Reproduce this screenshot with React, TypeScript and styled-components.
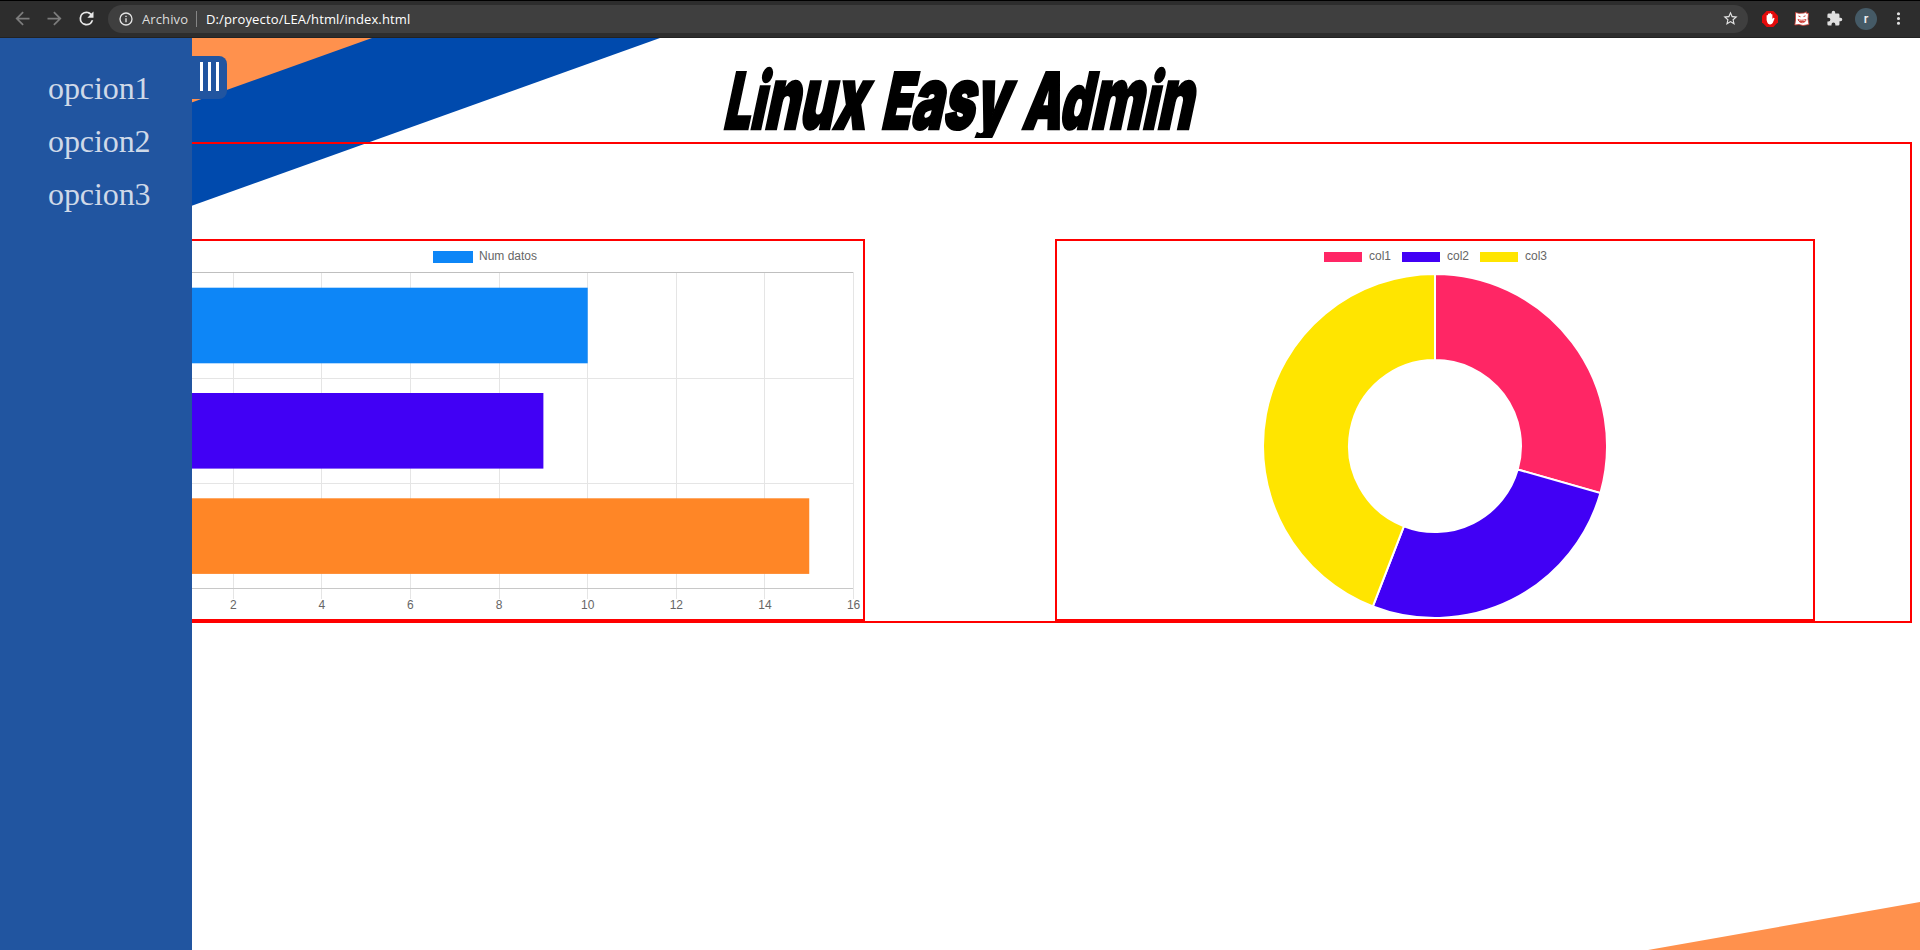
import React from 'react';
import styled, { createGlobalStyle } from 'styled-components';

const Global = createGlobalStyle`
  * { box-sizing: border-box; }
  html, body { margin: 0; padding: 0; background: #fff; overflow: hidden; }
`;

const Screen = styled.div`
  width: 1920px;
  height: 950px;
  display: flex;
  flex-direction: column;
  overflow: hidden;
`;

const BrowserBar = styled.header`
  height: 38px;
  flex: none;
  display: flex;
  align-items: center;
  padding: 0 0 1px 12px;
  background: #2d2d2d;
  border-top: 1px solid #000;
  border-bottom: 1px solid #222;
  font: 13px "Open Sans", "Noto Sans", sans-serif;
  color: #fff;
`;

const NavButton = styled.span<{ $dim?: boolean }>`
  width: 32px;
  height: 28px;
  display: grid;
  place-items: center;
  margin-left: -6px;
  margin-right: 6px;
  color: ${p => (p.$dim ? '#7c7c7c' : '#e8e8e8')};
`;

const Omnibox = styled.div`
  width: 1640px;
  height: 28px;
  display: flex;
  align-items: center;
  border-radius: 14px;
  background: #3f3f3f;
  padding: 0 9px 0 10px;
  color: #e4e4e4;
`;

const Scheme = styled.span`
  width: 55px;
  margin-left: 8px;
  border-right: 1px solid #858585;
  line-height: 16px;
  letter-spacing: 0.12px;
  color: #ddd;
`;

const Url = styled.span`
  flex: 1;
  margin-left: 9px;
  letter-spacing: 0.13px;
  color: #fff;
`;

const Extensions = styled.div`
  display: flex;
  align-items: center;
  margin-left: 12px;
`;

const ExtSlot = styled.span<{ $w: number }>`
  width: ${p => p.$w}px;
  height: 28px;
  display: grid;
  place-items: center;
  color: #e0e0e0;
`;

const Avatar = styled.span`
  width: 22px;
  height: 22px;
  border-radius: 50%;
  background: #455a66;
  font: 500 13px/21px Roboto, sans-serif;
  text-align: center;
  color: #eee;
`;

const Page = styled.div`
  position: relative;
  flex: 1;
  display: flex;
`;

const Backdrop = styled.svg`
  position: absolute;
  inset: 0;
`;

const Sidebar = styled.nav`
  position: absolute;
  z-index: 2;
  left: 0;
  top: 0;
  width: 192px;
  height: 912px;
  background: #2155a0;
  padding: 24px 0 0 48px;
`;

const Option = styled.a`
  display: block;
  height: 53px;
  font: 32px/53px "Liberation Serif", serif;
  letter-spacing: -0.08px;
  color: #cfd9e8;
`;

const Toggle = styled.button`
  position: absolute;
  left: 192px;
  top: 18px;
  width: 35px;
  height: 43px;
  display: flex;
  gap: 5px;
  border: 0;
  border-radius: 0 8px 8px 0;
  background: #2155a0;
  padding: 6px 0 8px 8px;
`;

const ToggleBar = styled.i`
  width: 3px;
  height: 29px;
  background: #fff;
`;

const Main = styled.main`
  position: relative;
  flex: 1;
  padding: 0 8px;
`;

const Title = styled.h1`
  margin: 0 0 0 714px;
  height: 104px;
  display: flex;
  font: 900 78px/78px Inter, sans-serif;
  color: #000;
  -webkit-text-stroke: 2.5px #000;
  clip-path: inset(0 0 4px 0);
`;

const Word = styled.span<{ $w: number; $scale: number }>`
  display: block;
  width: ${p => p.$w}px;
  padding-top: 23.5px;
  white-space: nowrap;
  transform-origin: 0 92px;
  transform: skewX(-12deg) scaleX(${p => p.$scale});
`;

const Letters = styled.span<{ $size: number }>`
  font-size: ${p => p.$size}px;
  line-height: 0;
`;

const Charts = styled.section`
  position: relative;
  height: 481px;
  display: flex;
  justify-content: space-around;
  border: 2px solid #f00;
  padding-top: 95px;
`;

const ChartBox = styled.div`
  width: 760px;
  height: 382px;
  border: 2px solid #f00;
  font: 12px "Liberation Sans", Arial, sans-serif;

  svg { display: block; }
`;

const ticks = [0, 2, 4, 6, 8, 10, 12, 14, 16];
const bars = [
  { value: 10, color: '#0d86f7' },
  { value: 9, color: '#4100f5' },
  { value: 15, color: '#ff8626' },
];
const originX = 37.6;
const unit = 44.31;

function BarChart() {
  return (
    <svg width="756" height="378">
      <rect x="326" y="10" width="40" height="12" fill="#0d86f7" />
      <text x="372" y="19" fill="#666">Num datos</text>
      <g shapeRendering="crispEdges">
        {ticks.map(t => (
          <rect key={t} x={Math.round(originX + t * unit - 0.5)} y="31" width="1" height="327" fill="#e5e5e5" />
        ))}
        {[137, 242].map(y => <rect key={y} x="27" y={y} width="719" height="1" fill="#e5e5e5" />)}
        <rect x="27" y="31" width="719" height="1" fill="#bfbfbf" />
        <rect x="27" y="347" width="719" height="1" fill="#c8c8c8" />
      </g>
      {bars.map((b, i) => (
        <rect key={b.value} x={originX} y={46.7 + i * 105.3} width={b.value * unit} height="75.6" fill={b.color} />
      ))}
      {ticks.map(t => (
        <text key={t} x={originX + t * unit} y="368" textAnchor="middle" fill="#666">{t}</text>
      ))}
    </svg>
  );
}

const slices = [
  { label: 'col1', value: 10, color: '#ff2665' },
  { label: 'col2', value: 9, color: '#4100f5' },
  { label: 'col3', value: 15, color: '#ffe500' },
];

function slicePath(from: number, to: number) {
  const at = (f: number, r: number) => {
    const a = f * Math.PI * 2;
    return `${378 + r * Math.sin(a)} ${205 - r * Math.cos(a)}`;
  };
  const large = to - from > 0.5 ? 1 : 0;
  return `M${at(from, 172)}A172 172 0 ${large} 1 ${at(to, 172)}L${at(to, 86)}A86 86 0 ${large} 0 ${at(from, 86)}Z`;
}

function DoughnutChart() {
  let sum = 0;
  return (
    <svg width="756" height="378">
      {slices.map((s, i) => {
        const from = sum / 34;
        sum += s.value;
        return (
          <g key={s.label}>
            <rect x={267 + i * 78} y="11" width="38" height="10" fill={s.color} />
            <text x={312 + i * 78} y="19" fill="#666">{s.label}</text>
            <path d={slicePath(from, sum / 34)} fill={s.color} stroke="#fff" strokeWidth="2" />
          </g>
        );
      })}
    </svg>
  );
}

const Glyph = ({ d, size = 18 }: { d: string; size?: number }) => (
  <svg width={size} height={size} viewBox="0 0 24 24" fill="currentColor"><path d={d} /></svg>
);

export default function App() {
  return (
    <Screen>
      <Global />
      <BrowserBar>
        <NavButton $dim><Glyph size={21} d="M20 11H7.83l5.59-5.59L12 4l-8 8 8 8 1.41-1.41L7.83 13H20v-2z" /></NavButton>
        <NavButton $dim><Glyph size={21} d="M12 4l-1.41 1.41L16.17 11H4v2h12.17l-5.58 5.59L12 20l8-8z" /></NavButton>
        <NavButton><Glyph size={21} d="M17.65 6.35A7.96 7.96 0 0 0 12 4a8 8 0 1 0 7.73 10h-2.08A6 6 0 1 1 12 6c1.66 0 3.14.69 4.22 1.78L13 11h7V4l-2.35 2.35z" /></NavButton>
        <Omnibox>
          <Glyph size={16} d="M11 7h2v2h-2zm0 4h2v6h-2zm1-9a10 10 0 1 0 0 20 10 10 0 0 0 0-20zm0 18a8 8 0 1 1 0-16 8 8 0 0 1 0 16z" />
          <Scheme>Archivo</Scheme>
          <Url>D:/proyecto/LEA/html/index.html</Url>
          <Glyph size={17} d="M22 9.24l-7.19-.62L12 2 9.19 8.63 2 9.24l5.46 4.73L5.82 21 12 17.27 18.18 21l-1.63-7.03L22 9.24zM12 15.4l-3.76 2.27 1-4.28-3.32-2.88 4.38-.38L12 6.1l1.71 4.04 4.38.38-3.32 2.88 1 4.28L12 15.4z" />
        </Omnibox>
        <Extensions>
          <ExtSlot $w={20}>
            <svg width="16" height="16" viewBox="0 0 16 16">
              <path d="M4.7 0h6.6L16 4.7v6.6L11.3 16H4.7L0 11.3V4.7z" fill="#e30b0b" />
              <path d="M4.6 9V4.6a.7.7 0 0 1 1.4 0V3.3a.7.7 0 0 1 1.5 0V2.8a.7.7 0 0 1 1.5 0v1a.7.7 0 0 1 1.4 0V8l.8-1a.8.8 0 0 1 1.3.8L10.700 12a3 3 0 0 1-5.500-.8z" fill="#fff" />
            </svg>
          </ExtSlot>
          <ExtSlot $w={44}>
            <svg width="16" height="16" viewBox="0 0 16 16">
              <path d="M1.5 1.5L5 2.3 10 2 12.5.8 12.3 2.2 14.5 2.3 14 8l1 5.5L9 14.5 5 13.5.8 14 1.5 9z" fill="#fff" stroke="#c9362f" strokeWidth=".8" />
              <path d="M4.5 5l2 .8M9.5 5.600l2-.8M4 8.500c2 1 5 1 8 0-.5 4-6.500 4.500-8 0zM5 10.500h6" fill="none" stroke="#d2423c" strokeWidth="1" />
            </svg>
          </ExtSlot>
          <ExtSlot $w={20}>
            <Glyph size={17} d="M20.5 11H19V7a2 2 0 0 0-2-2h-4V3.500a2.500 2.500 0 0 0-5 0V5H4a2 2 0 0 0-2 2v3.800h1.500a2.700 2.700 0 0 1 0 5.400H2V20a2 2 0 0 0 2 2h3.800v-1.500a2.700 2.700 0 0 1 5.400 0V22H17a2 2 0 0 0 2-2v-4h1.500a2.500 2.500 0 0 0 0-5z" />
          </ExtSlot>
          <ExtSlot $w={44}><Avatar>r</Avatar></ExtSlot>
          <ExtSlot $w={21}><Glyph size={19} d="M12 8a2 2 0 1 0 0-4 2 2 0 0 0 0 4zm0 2a2 2 0 1 0 0 4 2 2 0 0 0 0-4zm0 6a2 2 0 1 0 0 4 2 2 0 0 0 0-4z" /></ExtSlot>
        </Extensions>
      </BrowserBar>
      <Page>
        <Backdrop width="1920" height="912">
          <path d="M0 0H660L0 236.5Z" fill="#004aad" />
          <path d="M0 0H372L0 133Z" fill="#ff914d" />
          <path d="M1648 912L1920 864V912Z" fill="#ff914d" />
        </Backdrop>
        <Sidebar>
          {['opcion1', 'opcion2', 'opcion3'].map(o => <Option key={o}>{o}</Option>)}
          <Toggle aria-label="menu"><ToggleBar /><ToggleBar /><ToggleBar /></Toggle>
        </Sidebar>
        <Main>
          <Title>
            <Word $w={158} $scale={0.61}>L<Letters $size={78}>i</Letters><Letters $size={87}>nux</Letters></Word>
            <Word $w={141} $scale={0.615}>E<Letters $size={87}>asy</Letters></Word>
            <Word $w={190} $scale={0.628}>Ad<Letters $size={87}>m</Letters><Letters $size={78}>i</Letters><Letters $size={87}>n</Letters></Word>
          </Title>
          <Charts>
            <ChartBox><BarChart /></ChartBox>
            <ChartBox><DoughnutChart /></ChartBox>
          </Charts>
        </Main>
      </Page>
    </Screen>
  );
}
